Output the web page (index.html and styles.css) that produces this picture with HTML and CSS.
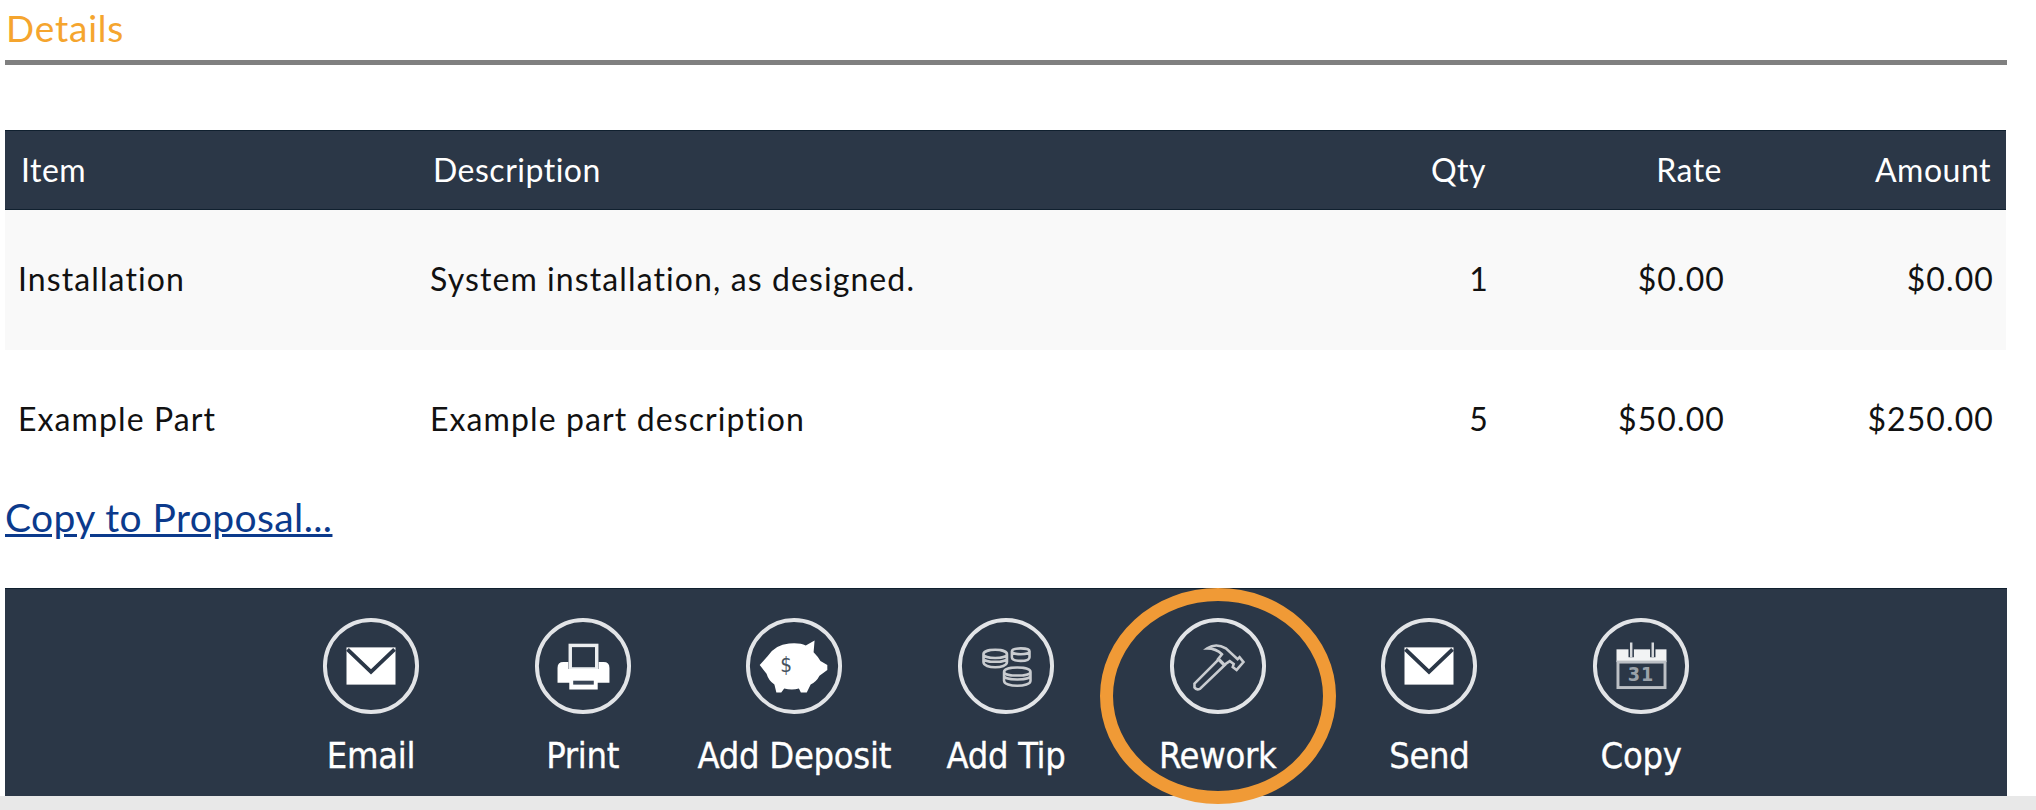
FILE: index.html
```html
<!DOCTYPE html>
<html>
<head>
    <title>Details</title>
    <meta charset="utf-8">
    <link rel="stylesheet" href="styles.css">
</head>
<body>
    <div class="page">
        <h2 class="section-title">Details</h2>

        <table class="items">
            <colgroup>
                <col class="col-item">
                <col class="col-desc">
                <col class="col-qty">
                <col class="col-rate">
                <col class="col-amount">
            </colgroup>
            <thead>
                <tr>
                    <th>Item</th>
                    <th>Description</th>
                    <th class="num">Qty</th>
                    <th class="num">Rate</th>
                    <th class="num">Amount</th>
                </tr>
            </thead>
            <tbody>
                <tr class="stripe">
                    <td>Installation</td>
                    <td>System installation, as designed.</td>
                    <td class="num">1</td>
                    <td class="num">$0.00</td>
                    <td class="num">$0.00</td>
                </tr>
                <tr>
                    <td>Example Part</td>
                    <td>Example part description</td>
                    <td class="num">5</td>
                    <td class="num">$50.00</td>
                    <td class="num">$250.00</td>
                </tr>
            </tbody>
        </table>

        <a class="copy-link" href="#">Copy to Proposal...</a>

        <div class="actions">
            <a class="action" href="#">
                <svg class="action-icon" viewBox="0 0 100 100">
                    <circle class="ring" cx="50" cy="50" r="47"/>
                    <rect class="fill" x="25" y="31" width="50" height="38"/>
                    <path class="cut" d="M26 33 L50 56 L74 33"/>
                </svg>
                <span>Email</span>
            </a>
            <a class="action" href="#">
                <svg class="action-icon" viewBox="0 0 100 100">
                    <circle class="ring" cx="50" cy="50" r="47"/>
                    <rect class="line-thick" x="37" y="29" width="27" height="24"/>
                    <path class="fill" d="M24 52 Q24 46 30 46 H35 V53 H66 V46 H71 Q77 46 77 52 V67 H24 Z"/>
                    <rect class="fill" x="36" y="60" width="29" height="14"/>
                    <rect class="slot" x="40" y="65" width="21" height="4"/>
                </svg>
                <span>Print</span>
            </a>
            <a class="action" href="#">
                <svg class="action-icon" viewBox="0 0 100 100">
                    <circle class="ring" cx="50" cy="50" r="47"/>
                    <path class="fill" d="M15 49 L23 40 Q31 28 45 27 Q56 26 62 29 L71 24 L70 36 Q75 41 77 45 L84 49 V54 L76 60 Q73 66 67 69 L63 77 H57 L55 73 Q48 75 40 73 L37 77 H32 L30 69 Q24 65 22 58 Z"/>
                    <text class="pig-sign" x="36" y="56">$</text>
                </svg>
                <span>Add Deposit</span>
            </a>
            <a class="action" href="#">
                <svg class="action-icon" viewBox="0 0 100 100">
                    <circle class="ring" cx="50" cy="50" r="47"/>
                    <path class="line" d="M27 38 C27 32 51 32 51 38 V46 C51 53 27 53 27 46 Z M27 38 C27 43 51 43 51 38 M27 42 C27 47 51 47 51 42"/>
                    <path class="line" d="M56 35 C56 31 74 31 74 35 V41 C74 46 56 46 56 41 Z M56 35 C56 39 74 39 74 35"/>
                    <path class="line" d="M48 56 C48 50 75 50 75 56 V65 C75 72 48 72 48 65 Z M48 56 C48 61 75 61 75 56 M48 60 C48 65 75 65 75 60"/>
                </svg>
                <span>Add Tip</span>
            </a>
            <a class="action action-marked" href="#">
                <svg class="action-icon" viewBox="0 0 100 100">
                    <circle class="ring" cx="50" cy="50" r="47"/>
                    <path class="line" d="M26 68 L51 43 L57 49 L32 73 Q28 75 26 72 Z"/>
                    <path class="line" d="M39 32 Q48 26 58 32 L70 43 L72 41 L76 46 L69 54 L65 51 L66 48 L62 45 L56 49 L50 43 L54 38 Q48 32 39 32 Z"/>
                </svg>
                <span>Rework</span>
                <div class="marker"></div>
            </a>
            <a class="action" href="#">
                <svg class="action-icon" viewBox="0 0 100 100">
                    <circle class="ring" cx="50" cy="50" r="47"/>
                    <rect class="fill" x="25" y="31" width="50" height="38"/>
                    <path class="cut" d="M26 33 L50 56 L74 33"/>
                </svg>
                <span>Send</span>
            </a>
            <a class="action" href="#">
                <svg class="action-icon" viewBox="0 0 100 100">
                    <circle class="ring" cx="50" cy="50" r="47"/>
                    <rect class="cal-top" x="25" y="33" width="51" height="13"/>
                    <path class="cal-pin-gap" d="M40 30 V41 M62 30 V41"/>
                    <path class="cal-pin" d="M40 26 V41 M62 26 V41"/>
                    <rect class="cal-body" x="26.5" y="46" width="48" height="26"/>
                    <text class="cal-day" x="50" y="65">31</text>
                </svg>
                <span>Copy</span>
            </a>
        </div>
    </div>
</body>
</html>
```

FILE: styles.css
```css
html, body {
    height: 100%;
    margin: 0;
    padding: 0;
    overflow: hidden;
}

body {
    background: #fff;
    font-family: 'Lato', sans-serif;
    color: #111;
}

.page {
    height: 796px;
    padding: 0 29px 0 5px;
    display: flex;
    flex-direction: column;
    background: #fff;
    border-bottom: 14px solid #e8e8e8;
}

.section-title {
    height: 60px;
    margin: 0;
    padding-left: 1px;
    font-size: 37px;
    line-height: 56px;
    letter-spacing: 0.8px;
    font-weight: 400;
    color: #f5a52e;
    border-bottom: 5px solid #808080;
}

.items {
    width: 2001px;
    margin-top: 65px;
    border-collapse: collapse;
    table-layout: fixed;
    font-size: 32px;
}

.col-item { width: 412px; }
.col-desc { width: 884px; }
.col-qty { width: 200px; }
.col-rate { width: 236px; }
.col-amount { width: 269px; }

.items th {
    height: 79px;
    padding: 0 15px 2px 16px;
    background: #2b3747;
    color: #fff;
    font-weight: 400;
    letter-spacing: 0.5px;
    text-align: left;
    border-top: 1px solid #10202f;
    border-bottom: 1px solid #10202f;
    box-sizing: border-box;
}

.items td {
    height: 140px;
    padding: 0 12px 3px 13px;
    letter-spacing: 1.1px;
    box-sizing: border-box;
}

.items .num {
    text-align: right;
}

.stripe td {
    background: #f9f9f9;
}

.copy-link {
    align-self: flex-start;
    margin-top: 4px;
    font-size: 39px;
    line-height: 46px;
    letter-spacing: 0.4px;
    color: #0b3a8c;
}

.actions {
    height: 208px;
    margin-top: 48px;
    width: 2002px;
    display: flex;
    justify-content: center;
    background: #2b3747;
    border-top: 1px solid #10202f;
    box-sizing: border-box;
}

.action {
    position: relative;
    width: 211.7px;
    display: flex;
    flex-direction: column;
    align-items: center;
    padding-top: 28px;
    color: #fff;
    text-decoration: none;
    font-family: 'DejaVu Sans', sans-serif;
    font-stretch: condensed;
    font-size: 36px;
    line-height: 40px;
    letter-spacing: -0.3px;
    -webkit-text-stroke: 0.3px #fff;
}

.action-icon {
    width: 100px;
    height: 98px;
    margin-bottom: 21px;
}

.action span {
    white-space: nowrap;
}

.ring {
    fill: none;
    stroke: #e2e4e7;
    stroke-width: 4;
}

.fill {
    fill: #fff;
}

.cut {
    fill: none;
    stroke: #2b3747;
    stroke-width: 4;
}

.slot {
    fill: #3a4656;
}

.line {
    fill: none;
    stroke: #c9ccd0;
    stroke-width: 2.6;
}

.line-thick {
    fill: none;
    stroke: #eceef0;
    stroke-width: 3.5;
}

.pig-sign {
    font-family: 'DejaVu Sans', sans-serif;
    font-size: 21px;
    letter-spacing: 0;
    stroke: none;
    fill: #46525f;
}

.cal-top {
    fill: #f2f3f4;
}

.cal-pin-gap {
    fill: none;
    stroke: #2b3747;
    stroke-width: 5.5;
}

.cal-pin {
    fill: none;
    stroke: #d8dadd;
    stroke-width: 2.5;
}

.cal-body {
    fill: none;
    stroke: #bcc0c5;
    stroke-width: 3;
}

.cal-day {
    font-family: 'DejaVu Sans', sans-serif;
    font-size: 20px;
    font-weight: 700;
    letter-spacing: 1px;
    text-anchor: middle;
    stroke: none;
    fill: #9aa1a9;
}

.marker {
    position: absolute;
    left: -12px;
    top: -1px;
    width: 236px;
    height: 216px;
    border: 13px solid #f09a36;
    border-radius: 50%;
    box-sizing: border-box;
}
```
